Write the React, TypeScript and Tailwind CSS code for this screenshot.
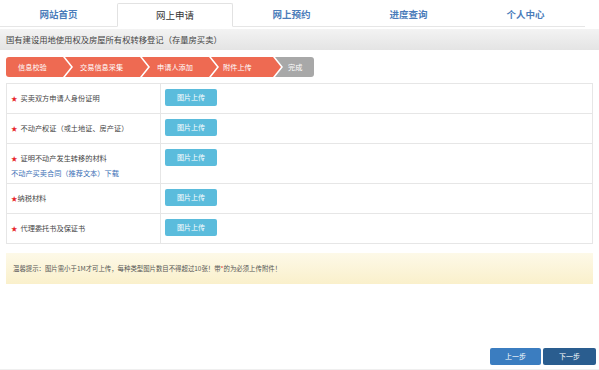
import React from "react";

const tabs = ["网站首页", "网上申请", "网上预约", "进度查询", "个人中心"];

const steps = [
  { label: "信息校验", w: "w-[65px]", kind: "first" },
  { label: "交易信息采集", w: "w-[83px]", kind: "mid" },
  { label: "申请人添加", w: "w-[75px]", kind: "mid" },
  { label: "附件上传", w: "w-[70px]", kind: "mid" },
  { label: "完成", w: "w-[39px]", kind: "last" },
];

function UploadBtn() {
  return (
    <div className="mt-[5px] ml-[4px] w-[52px] h-[17px] bg-[#5bbcdc] rounded-[2px] text-white text-[7px] flex items-center justify-center">
      图片上传
    </div>
  );
}

function Star({ space = true }: { space?: boolean }) {
  return (
    <span className={"text-[#e8262b] text-[6.5px] " + (space ? "mr-[3px]" : "")}>★</span>
  );
}

export default function App() {
  return (
    <div className="w-[599px] h-[370px] bg-white font-['Microsoft_YaHei','Noto_Sans_CJK_SC',sans-serif] text-[#444] overflow-hidden">
      {/* tabs */}
      <div className="flex w-[585px] h-[27px] border-b border-[#e6e6e6]">
        {tabs.map((t, i) =>
          i === 1 ? (
            <div
              key={t}
              className="w-[116px] mt-[3px] h-[24px] -mb-px border border-[#e2e2e2] border-b-white bg-white flex items-center justify-center text-[9.5px] text-[#333] rounded-t-[2px]"
            >
              {t}
            </div>
          ) : (
            <div
              key={t}
              className="w-[117px] flex items-center justify-center pt-[3px] text-[9.5px] font-semibold text-[#4a7cba]"
            >
              {t}
            </div>
          )
        )}
      </div>

      {/* title */}
      <div className="mt-[2px] h-[21px] bg-linear-to-b from-[#f3f3f3] to-[#e4e4e4] pl-[6px] flex items-center text-[8.3px] text-[#444]">
        国有建设用地使用权及房屋所有权转移登记（存量房买卖）
      </div>

      {/* steps */}
      <div className="mt-[7px] ml-[6px] flex h-[20px]">
        {steps.map((s, i) => {
          const base =
            "h-[20px] flex items-center text-white text-[7.2px] " + s.w + " ";
          if (s.kind === "first")
            return (
              <div
                key={s.label}
                className={
                  base +
                  "pl-[12px] bg-[#ee6a52] rounded-l-[3px] [clip-path:polygon(0_0,calc(100%_-_8px)_0,100%_50%,calc(100%_-_8px)_100%,0_100%)]"
                }
              >
                {s.label}
              </div>
            );
          if (s.kind === "last")
            return (
              <div
                key={s.label}
                className={
                  base +
                  "-ml-[6px] pl-[13px] bg-[#a8a8a8] rounded-r-[3px] [clip-path:polygon(0_0,100%_0,100%_100%,0_100%,8px_50%)]"
                }
              >
                {s.label}
              </div>
            );
          return (
            <div
              key={s.label}
              className={
                base +
                "-ml-[6px] " +
                (i === 3 ? "pl-[12px] " : "pl-[15px] ") +
                "bg-[#ee6a52] [clip-path:polygon(0_0,calc(100%_-_8px)_0,100%_50%,calc(100%_-_8px)_100%,0_100%,8px_50%)]"
              }
            >
              {s.label}
            </div>
          );
        })}
      </div>

      {/* table */}
      <div className="mt-[6px] ml-[6px] w-[587px] border border-[#e6e6e6] text-[7.2px] text-[#444]">
        <div className="grid grid-cols-[154px_1fr] h-[29px]">
          <div className="border-r border-[#e6e6e6] flex items-center pl-[4px]">
            <Star />
            买卖双方申请人身份证明
          </div>
          <div>
            <UploadBtn />
          </div>
        </div>
        <div className="grid grid-cols-[154px_1fr] h-[30px] border-t border-[#e6e6e6]">
          <div className="border-r border-[#e6e6e6] flex items-center pl-[4px]">
            <Star />
            不动产权证（或土地证、房产证）
          </div>
          <div>
            <UploadBtn />
          </div>
        </div>
        <div className="grid grid-cols-[154px_1fr] h-[40px] border-t border-[#e6e6e6]">
          <div className="border-r border-[#e6e6e6] pl-[4px] pt-[9px] leading-[11px]">
            <div className="flex items-center">
              <Star />
              证明不动产发生转移的材料
            </div>
            <div className="mt-[4px] text-[#3a6fb5]">不动产买卖合同（推荐文本）下载</div>
          </div>
          <div>
            <UploadBtn />
          </div>
        </div>
        <div className="grid grid-cols-[154px_1fr] h-[30px] border-t border-[#e6e6e6]">
          <div className="border-r border-[#e6e6e6] flex items-center pl-[4px]">
            <Star space={false} />
            纳税材料
          </div>
          <div>
            <UploadBtn />
          </div>
        </div>
        <div className="grid grid-cols-[154px_1fr] h-[30px] border-t border-[#e6e6e6]">
          <div className="border-r border-[#e6e6e6] flex items-center pl-[4px]">
            <Star />
            代理委托书及保证书
          </div>
          <div>
            <UploadBtn />
          </div>
        </div>
      </div>

      {/* notice */}
      <div className="mt-[9px] ml-[6px] w-[587px] h-[31px] bg-linear-to-b from-[#fdf9e8] to-[#faf0cb] flex items-center pl-[7px] text-[6.4px] text-[#555]">
        温馨提示：图片需小于1M才可上传，每种类型图片数目不得超过10张！带
        <span className="text-[#e8262b]">*</span>
        的为必须上传附件！
      </div>

      {/* buttons */}
      <div className="mt-[64px] flex justify-end pr-[3px] gap-[2px]">
        <div className="w-[51px] h-[17px] bg-[#3b7dc0] rounded-[2px] text-white text-[7px] flex items-center justify-center">
          上一步
        </div>
        <div className="w-[53px] h-[17px] bg-[#2a5d8f] rounded-[2px] text-white text-[7px] flex items-center justify-center">
          下一步
        </div>
      </div>
      <div className="mt-[4px] h-px bg-[#efefef]" />
    </div>
  );
}
